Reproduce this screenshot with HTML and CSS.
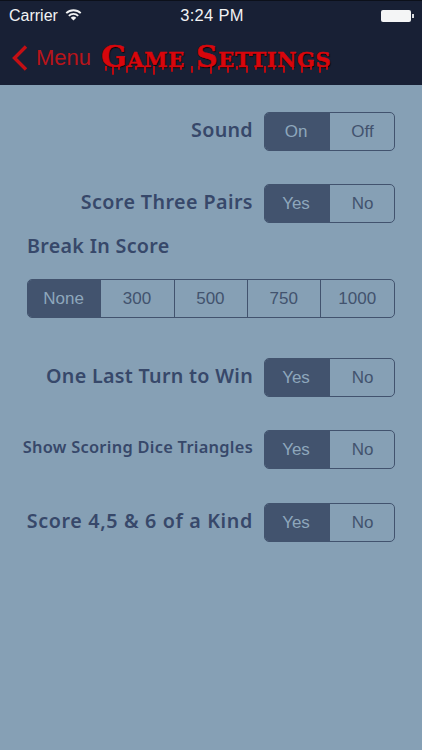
FILE: index.html
```html
<!DOCTYPE html>
<html lang="en">
<head>
<meta charset="utf-8">
<title>Game Settings</title>
<link rel="stylesheet" href="styles.css">
</head>
<body>
<header class="top">
  <div class="status">
    <div class="status-left">
      <span>Carrier</span>
      <svg class="wifi" viewBox="0 0 16 12" width="17" height="13"><path d="M0.6 4.2A10.5 10.5 0 0 1 15.4 4.2L14.2 5.4A8.8 8.8 0 0 0 1.8 5.4Z M3 6.6A7.2 7.2 0 0 1 13 6.6L11.8 7.8A5.5 5.5 0 0 0 4.2 7.8Z M5.4 9A3.8 3.8 0 0 1 10.6 9L8 11.6Z" fill="#f2f3f4"/></svg>
    </div>
    <span class="time">3:24 PM</span>
    <div class="battery"><span class="battery-body"></span><span class="battery-tip"></span></div>
  </div>
  <nav class="nav">
    <div class="back">
      <svg class="chevron" viewBox="0 0 18 28" width="18" height="28"><path d="M15 2.5L3.5 14L15 25.5" fill="none" stroke="#c40f14" stroke-width="3.4"/></svg>
      <span>Menu</span>
    </div>
    <h1 class="title">
      <span class="title-text">Game Settings</span>
      <svg class="drips" viewBox="0 0 228 12" width="228" height="12" aria-hidden="true"><path d="M4 0v4M11 0v8M17 0v3M25 0v6M34 0v3M43 0v6M52 0v8M61 0v3M70 0v5M79 0v3M90 0v6M97 0v3M109 0v7M117 0v3M126 0v6M135 0v3M145 0v6M154 0v3M163 0v6M172 0v3M182 0v6M191 0v3M200 0v6M209 0v3M218 0v6M225 0v3" stroke="#d0070d" stroke-width="1.8" stroke-linecap="round"/></svg>
    </h1>
  </nav>
</header>
<main class="settings">
  <div class="row row-sound">
    <span class="label">Sound</span>
    <div class="seg seg-two"><span class="opt on">On</span><span class="opt">Off</span></div>
  </div>
  <div class="row row-pairs">
    <span class="label label-pairs">Score Three Pairs</span>
    <div class="seg seg-two"><span class="opt on">Yes</span><span class="opt">No</span></div>
  </div>
  <div class="label break-label">Break In Score</div>
  <div class="seg seg-five"><span class="opt on">None</span><span class="opt">300</span><span class="opt">500</span><span class="opt">750</span><span class="opt">1000</span></div>
  <div class="row row-last">
    <span class="label">One Last Turn to Win</span>
    <div class="seg seg-two"><span class="opt on">Yes</span><span class="opt">No</span></div>
  </div>
  <div class="row row-dice">
    <span class="label label-small">Show Scoring Dice Triangles</span>
    <div class="seg seg-two"><span class="opt on">Yes</span><span class="opt">No</span></div>
  </div>
  <div class="row row-kind">
    <span class="label label-wide">Score 4,5 &amp; 6 of a Kind</span>
    <div class="seg seg-two"><span class="opt on">Yes</span><span class="opt">No</span></div>
  </div>
</main>
</body>
</html>
```
FILE: styles.css
```css
* { box-sizing: border-box; }
html, body { margin: 0; padding: 0; }
body {
  width: 422px;
  height: 750px;
  overflow: hidden;
  background: #86a0b5;
  font-family: "Liberation Sans", Arial, sans-serif;
  color: #3c4d67;
}
.top {
  height: 85px;
  background: #182035;
  border-top: 1px solid #0c101a;
}
.status {
  height: 29px;
  padding: 0 8px 0 9px;
  display: grid;
  grid-template-columns: 1fr auto 1fr;
  align-items: center;
  color: #f2f3f4;
  font-size: 16px;
}
.status-left { display: flex; align-items: center; gap: 7px; }
.wifi { margin-top: -3px; }
.time { font-size: 16.5px; letter-spacing: 0.3px; margin-left: 1px; }
.battery { justify-self: end; display: flex; align-items: center; gap: 1px; }
.battery-body { width: 30px; height: 12px; background: #f4f5f6; border-radius: 2px; }
.battery-tip { width: 2px; height: 4px; background: #d8dade; }
.nav {
  height: 55px;
  padding-left: 11px;
  display: flex;
  align-items: center;
}
.back {
  display: flex;
  align-items: center;
  gap: 7px;
  color: #b9141a;
  font-size: 22px;
  margin-top: 1px;
}
.title {
  position: relative;
  margin: -2px 0 0 10px;
  line-height: 30px;
  font-family: "DejaVu Serif", serif;
  font-size: 30px;
  font-weight: 700;
  font-variant: small-caps;
  letter-spacing: 0.65px;
  white-space: nowrap;
  color: #d8060c;
  -webkit-text-stroke: 0.5px #d8060c;
  text-shadow: 1px 1px 1px #000;
}
.drips { position: absolute; left: 1px; top: 24px; }
.settings { display: flex; flex-direction: column; }
.row {
  display: flex;
  justify-content: flex-end;
  align-items: center;
  gap: 11px;
  padding-right: 27px;
}
.row-sound { margin-top: 27px; }
.row-pairs { margin-top: 33px; }
.row-last { margin-top: 40px; }
.row-dice { margin-top: 33px; }
.row-kind { margin-top: 34px; }
.label {
  font-family: "Noto Sans", sans-serif;
  font-weight: 600;
  font-size: 19.7px;
  letter-spacing: 0.3px;
  color: #37486a;
  margin-top: -5px;
  white-space: nowrap;
}
.label-pairs { letter-spacing: 0.42px; }
.label-small { font-size: 16.4px; letter-spacing: 0.28px; margin-top: -7px; }
.label-wide { letter-spacing: 0.65px; }
.break-label { margin: 9px 0 0 27px; line-height: 27px; }
.seg {
  display: flex;
  height: 39px;
  border: 1.5px solid #42536e;
  border-radius: 5px;
  overflow: hidden;
  font-size: 17px;
  color: #42536e;
}
.seg-two { width: 131px; }
.seg-two .opt { width: 65px; flex: none; }
.seg-two .opt.on { padding-right: 3px; }
.seg-five { width: 368px; margin: 20px 0 0 27px; }
.seg-five .opt { flex: 1; border-left: 1.5px solid #42536e; margin-left: -0.25px; padding-right: 1px; }
.seg-five .opt:first-child { border-left: 0; }
.opt { display: flex; align-items: center; justify-content: center; }
.opt.on { background: #42536e; color: #8ea7bc; }
```
